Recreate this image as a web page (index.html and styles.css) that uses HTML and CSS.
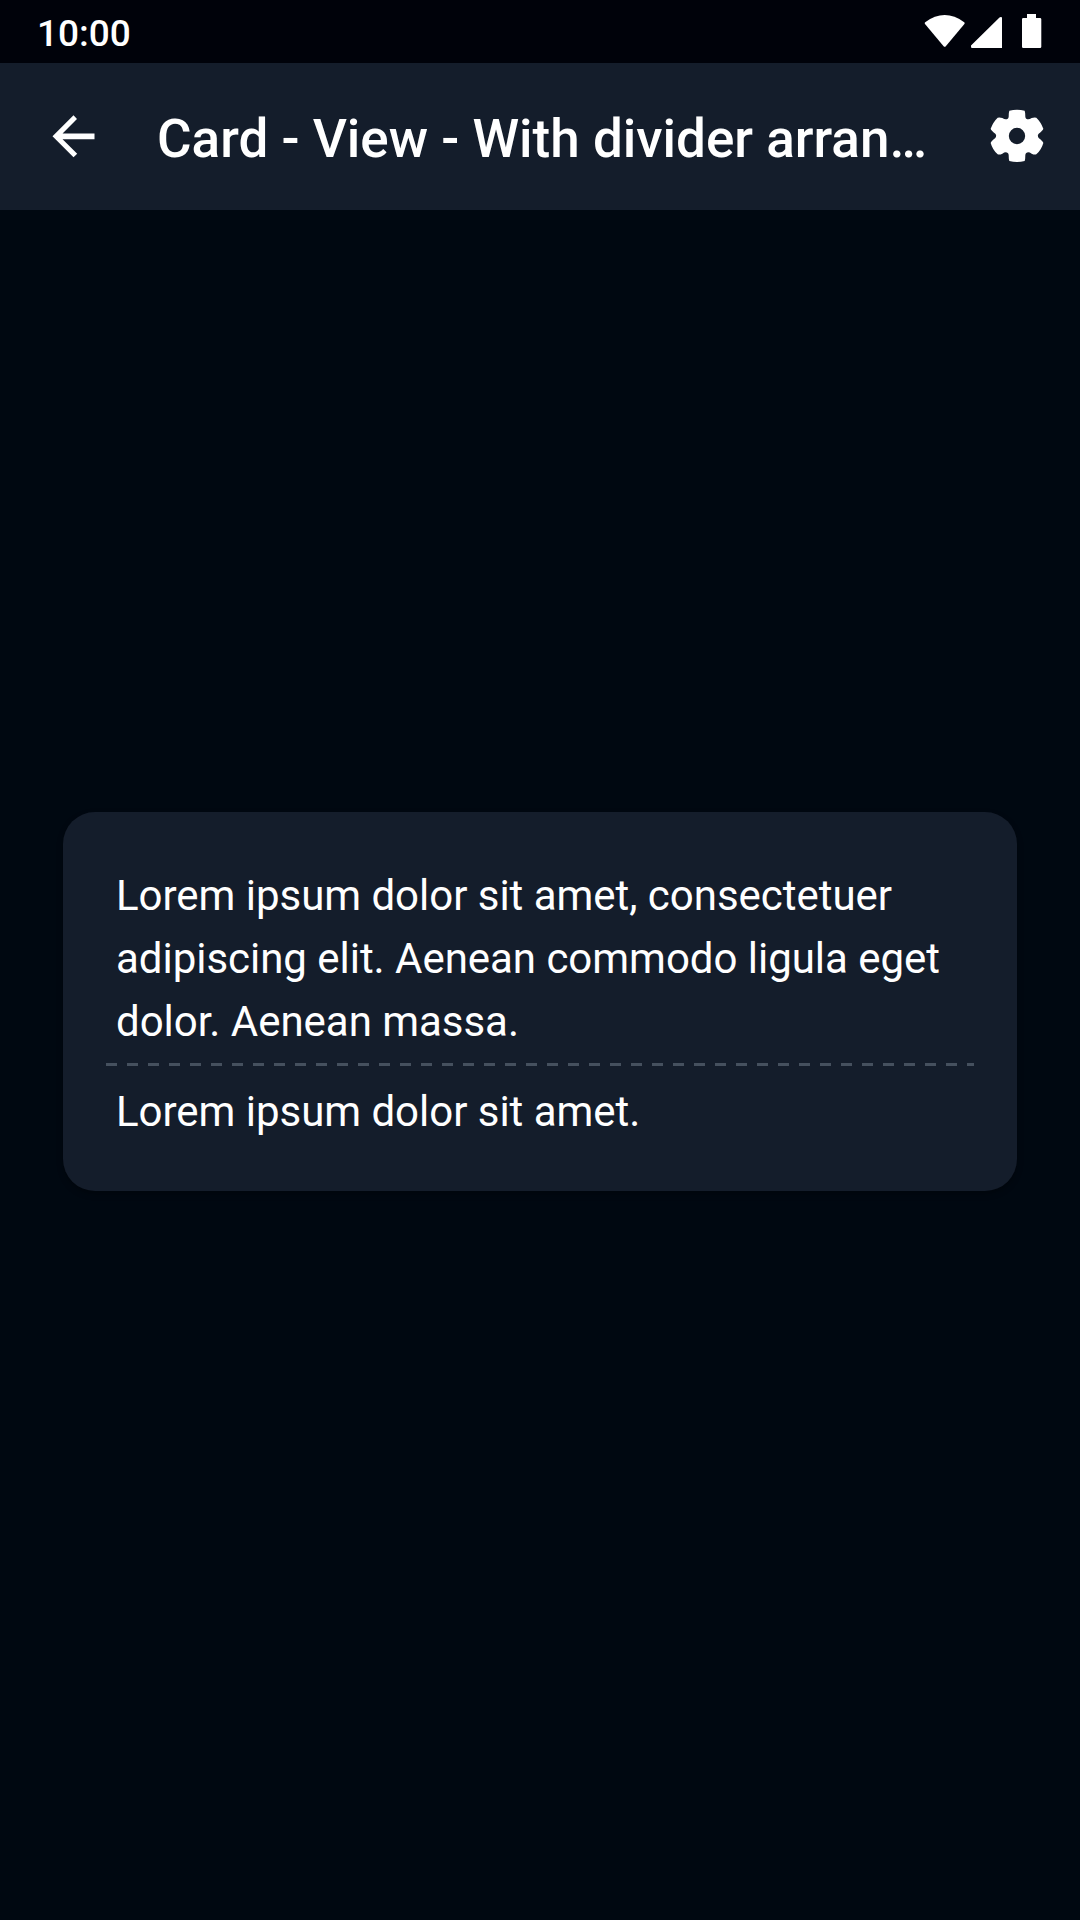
FILE: index.html
```html
<!DOCTYPE html>
<html lang="en">
<head>
<meta charset="utf-8">
<title>Card</title>
<link rel="stylesheet" href="styles.css">
</head>
<body>
<header class="status">
  <span class="clock">10:00</span>
  <svg class="status-icons" width="118" height="63" viewBox="924 0 118 63" fill="#fff">
    <path d="M925.2 22.2Q944.7 8 964.2 22.2Q965.2 23 964.4 24L945.8 46.2Q944.7 47.2 943.6 46.2L925 24Q924.2 23 925.2 22.2Z"/>
    <path d="M1000.8 17Q1002 16.8 1002 18V48H972Q971 48 971 46.5V45.5L999.5 17.5Q1000 17 1000.8 17Z"/>
    <path d="M1027 14h9v4h4q1.3 0 1.3 1.3v27.4q0 1.3-1.3 1.3h-16.7q-1.3 0-1.3-1.3V19.3q0-1.3 1.3-1.3h3.7z"/>
  </svg>
</header>
<nav class="appbar">
  <svg class="back" width="63" height="63" viewBox="0 0 24 24" fill="#fff"><path d="M20 10.85H7.83l5.5-5.5L12 3.95l-8 8 8 8 1.41-1.41L7.83 13.05H20v-2.2z"/></svg>
  <h1 class="title">Card - View - With divider arran…</h1>
  <svg class="gear" width="54" height="54" viewBox="0 0 162 162" fill="#fff" fill-rule="evenodd"><path d="M58 5Q81 -1 104 5Q106 10 106 23Q107 31 115 31Q119 31 125 27Q133 24 139 26Q152 38 160 59Q159 64 146 74Q141 80 146 87Q159 97 160 102Q154 123 139 136Q133 138 125 134Q119 130 115 130Q107 130 106 138Q106 151 104 156Q81 162 58 156Q56 151 56 138Q55 130 47 130Q43 130 37 134Q29 138 23 136Q8 123 2 102Q3 97 16 87Q21 80 16 74Q3 64 2 59Q10 38 23 26Q29 24 37 27Q43 31 47 31Q55 31 56 23Q56 10 58 5ZM81 56.5a24.5 24.5 0 1 0 0 49a24.5 24.5 0 1 0 0 -49Z"/></svg>
</nav>
<main class="content">
  <section class="card">
    <p class="text">Lorem ipsum dolor sit amet, consectetuer<br>adipiscing elit. Aenean commodo ligula eget<br>dolor. Aenean massa.</p>
    <div class="divider"></div>
    <p class="text">Lorem ipsum dolor sit amet.</p>
  </section>
</main>
</body>
</html>
```
FILE: styles.css
```css
* { box-sizing: border-box; margin: 0; }
body { width: 1080px; height: 1920px; display: flex; flex-direction: column; background: #000811; color: #fff; font-family: Roboto, sans-serif; overflow: hidden; }
.status { height: 63px; flex: none; display: flex; align-items: center; justify-content: space-between; padding: 0 38px 0 37px; background: #00020a; }
.clock { font-size: 37px; font-weight: 500; padding-top: 3px; }
.appbar { height: 147px; flex: none; display: flex; align-items: center; background: #141d2b; padding: 0 36.5px 0 42px; }
.title { font-size: 53px; font-weight: 500; margin-left: 52px; flex: 1; white-space: nowrap; padding-top: 4px; }
.gear { margin-bottom: 2px; }
.content { flex: 1; padding: 602px 63px 0; }
.card { height: 379px; border-radius: 32px; background: #141d2b; padding: 52px 43px 0; box-shadow: 0 3px 6px rgba(0, 0, 0, 0.3); }
.text { font-size: 42px; line-height: 63px; padding-left: 10px; white-space: nowrap; letter-spacing: -0.03px; }
.divider { height: 3px; margin: 10px 0 14px; background: repeating-linear-gradient(90deg, #45505e 0 11px, transparent 11px 21px); }
```
